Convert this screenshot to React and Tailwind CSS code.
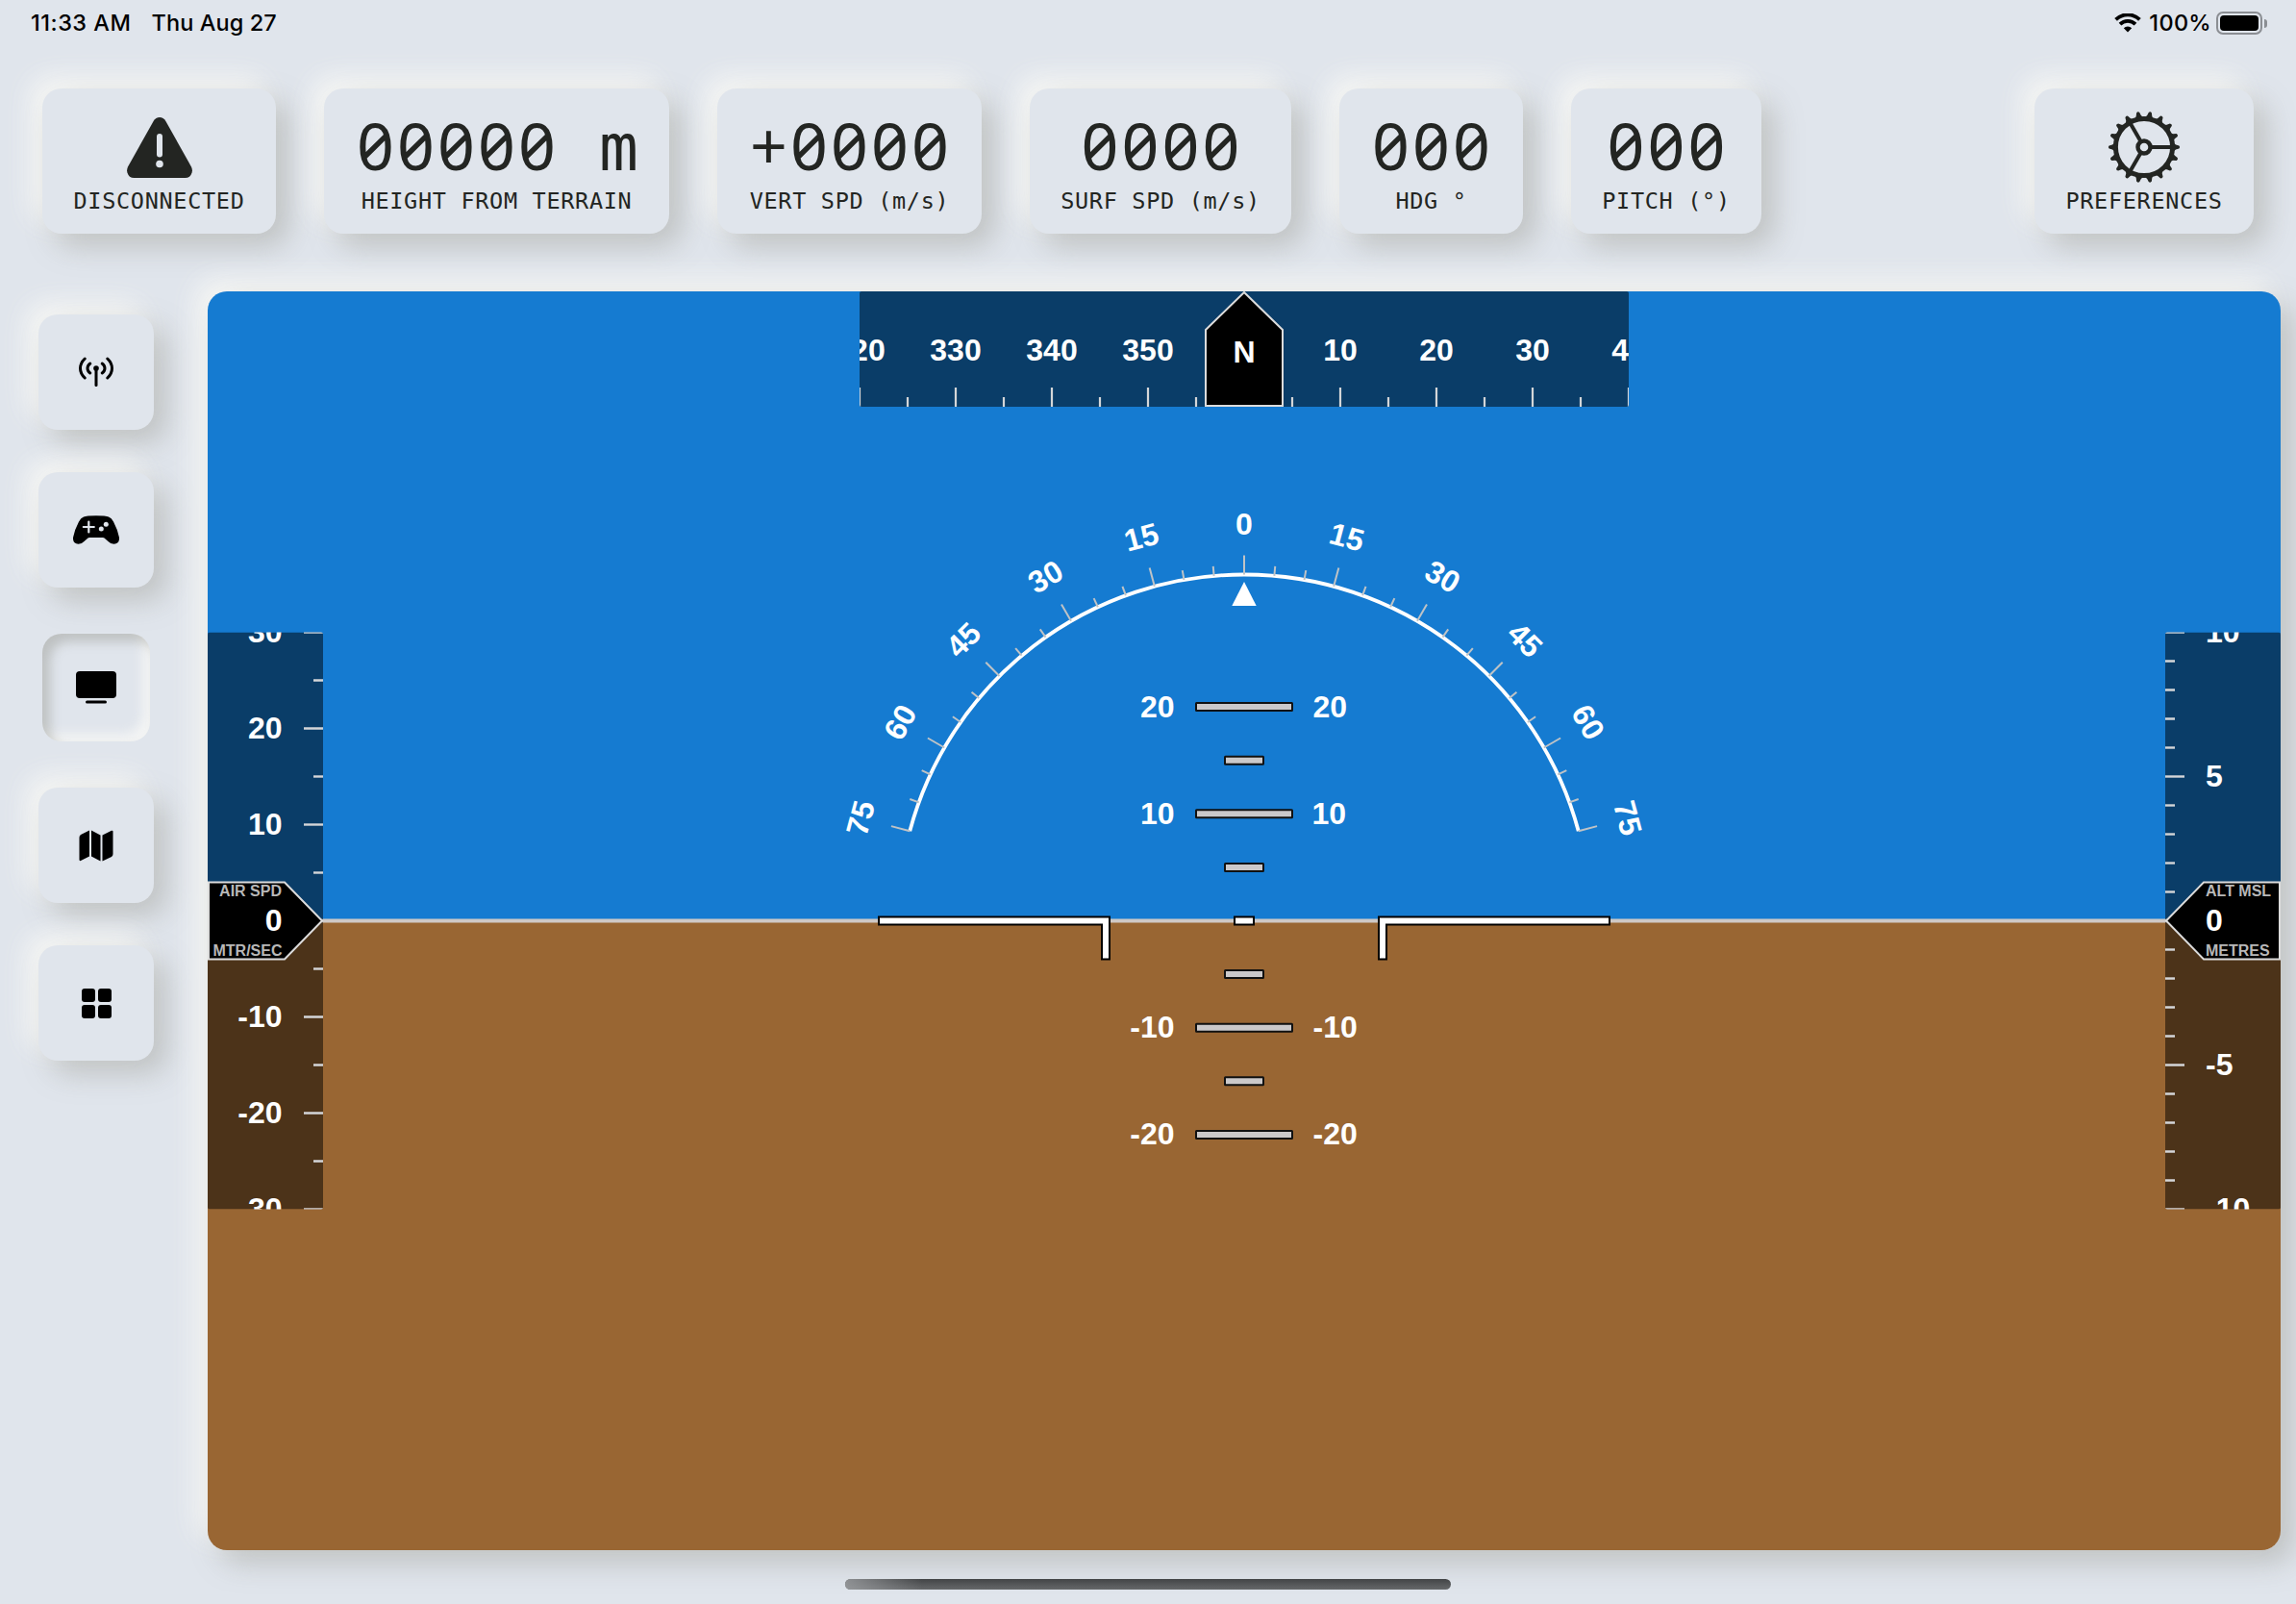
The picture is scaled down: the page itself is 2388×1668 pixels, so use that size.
const RAISED =
  "bg-[#e0e5ec] rounded-[20px] shadow-[13px_13px_30px_rgba(130,130,120,0.36),-11px_-11px_28px_rgba(250,250,247,0.95)]";

const TEXT = { fontFamily: '"Liberation Sans", Arial, sans-serif', fontWeight: 700 };

function Wifi() {
  return (
    <svg className="h-5 w-7" viewBox="0 0 28 20" fill="none" stroke="#000">
      <path d="M1.6 6.4 A17.6 17.6 0 0 1 26.4 6.4" strokeWidth="3.8" />
      <path d="M6 11.1 A11.4 11.4 0 0 1 22 11.1" strokeWidth="3.8" />
      <path d="M14 19.6 L9.8 15.3 A6 6 0 0 1 18.2 15.3 Z" fill="#000" stroke="none" />
    </svg>
  );
}

function StatusBar() {
  return (
    <header className="flex h-12 shrink-0 items-center justify-between pl-8 pr-[30px] font-['Inter',sans-serif] text-[23.5px] font-medium leading-none text-black">
      <div className="flex gap-[21px]">
        <span className="tracking-[0.5px]">11:33 AM</span>
        <span className="tracking-[0.1px]">Thu Aug 27</span>
      </div>
      <div className="flex items-center">
        <Wifi />
        <span className="ml-2 tracking-[0.3px]">100%</span>
        <div className="ml-[5px] flex h-6 w-12 items-center rounded-[7px] border-2 border-[#8b8e93] p-[2px]">
          <div className="h-full w-full rounded-[4px] bg-black" />
        </div>
        <div className="ml-[2px] h-[9px] w-[3px] rounded-r-full bg-[#8b8e93]" />
      </div>
    </header>
  );
}

function WarningIcon() {
  return (
    <svg className="h-[63px] w-[68px]" viewBox="0 0 68 63">
      <path
        d="M27.6 4 Q30 0 34 0 T40.4 4 L67 51.5 Q68.4 54.5 67.6 57.5 Q66 63 60.5 63 H7.5 Q2 63 .4 57.5 Q-.4 54.5 1 51.5 Z"
        fill="#232522"
      />
      <rect x="31" y="17" width="6" height="24.5" rx="3" fill="#e0e5ec" />
      <circle cx="34" cy="48.5" r="3.8" fill="#e0e5ec" />
    </svg>
  );
}

function GearIcon() {
  const teeth = Array.from({ length: 18 }, (_, i) => i * 20);
  return (
    <svg className="h-[76px] w-[76px]" viewBox="-38 -38 76 76">
      {teeth.map((a) => (
        <path
          key={a}
          d="M30 -5 L33 -2.6 L36.4 -1.6 Q38 0 36.4 1.6 L33 2.6 L30 5 Z"
          transform={`rotate(${a})`}
          fill="#232522"
        />
      ))}
      <circle r="29.6" fill="none" stroke="#232522" strokeWidth="5" />
      <circle r="6.5" fill="none" stroke="#232522" strokeWidth="4.4" />
      {[0, 120, 240].map((a) => (
        <path key={a} d="M7 0H29" transform={`rotate(${a})`} stroke="#232522" strokeWidth="4" />
      ))}
    </svg>
  );
}

function Card({ width, label, children }) {
  return (
    <div className={`${RAISED} ${width} flex h-[151px] shrink-0 flex-col items-center text-[#232522]`}>
      <div className="mt-[29px] flex h-16 items-center justify-center">{children}</div>
      <div className="mt-2 whitespace-pre font-['DejaVu_Sans_Mono',monospace] text-[23.5px] leading-8 tracking-[0.68px]">
        {label}
      </div>
    </div>
  );
}

function Value({ children, unit }) {
  return (
    <div className="-mt-[5px] h-16 whitespace-pre pl-[3px] font-['Noto_Sans',sans-serif] text-[68px] leading-[64px] tracking-[3.1px] [font-feature-settings:'zero','tnum']">
      {children}
      {unit && <span className="font-['DejaVu_Sans_Mono',monospace] text-[68px] leading-none tracking-[1px]">{` ${unit}`}</span>}
    </div>
  );
}

function TopCards() {
  return (
    <div className="mt-11 flex shrink-0 gap-[50px] pl-11 pr-11">
      <Card width="w-[243px]" label="DISCONNECTED">
        <WarningIcon />
      </Card>
      <Card width="w-[359px]" label="HEIGHT FROM TERRAIN">
        <Value unit="m">00000</Value>
      </Card>
      <Card width="w-[275px]" label="VERT SPD (m/s)">
        <Value>+0000</Value>
      </Card>
      <Card width="w-[272px]" label="SURF SPD (m/s)">
        <Value>0000</Value>
      </Card>
      <Card width="w-[191px]" label="HDG °">
        <Value>000</Value>
      </Card>
      <Card width="w-[198px]" label="PITCH (°)">
        <Value>000</Value>
      </Card>
      <div className="grow" />
      <Card width="w-[228px]" label="PREFERENCES">
        <GearIcon />
      </Card>
    </div>
  );
}

function AntennaIcon() {
  return (
    <svg className="h-[32px] w-[36px]" viewBox="0 0 36 32" fill="none" stroke="#000" strokeWidth="3" strokeLinecap="round">
      <path d="M6.2 2 Q1.5 6.5 1.5 12 T6.2 22" />
      <path d="M11.8 7 Q9 9 9 12 T11.8 17" />
      <path d="M24.2 7 Q27 9 27 12 T24.2 17" />
      <path d="M29.8 2 Q34.5 6.5 34.5 12 T29.8 22" />
      <path d="M18 12 V29.5" />
      <circle cx="18" cy="12" r="2.8" fill="#000" stroke="none" />
    </svg>
  );
}

function GamepadIcon() {
  return (
    <svg className="h-[30px] w-[48px]" viewBox="0 0 48 30">
      <path
        d="M11 1.6 Q14 .2 24 .2 T37 1.6 Q40 2.6 42 6.5 Q46.500 15 48 23 Q48.400 29.500 42.500 29.800 Q39 29.800 36.500 27 L32.500 23.500 Q32 23 31 23 H17 Q16 23 15.500 23.500 L11.500 27 Q9 29.800 5.500 29.800 Q-.4 29.500 0 23 Q1.500 15 6 6.500 Q8 2.600 11 1.600 Z"
        fill="#000"
      />
      <path d="M16.300 6.500 V17.500 M10.800 12 H21.800" stroke="#e0e5ec" strokeWidth="2.200" strokeLinecap="round" />
      <circle cx="29.300" cy="14" r="2.500" fill="#e0e5ec" />
      <circle cx="34.300" cy="9.300" r="2.500" fill="#e0e5ec" />
    </svg>
  );
}

function DisplayIcon() {
  return (
    <svg className="h-[34px] w-[42px]" viewBox="0 0 42 34">
      <rect width="42" height="28" rx="4" />
      <rect x="10" y="30.500" width="22" height="3" rx="1.500" />
    </svg>
  );
}

function MapIcon() {
  return (
    <svg className="h-[33px] w-[36px]" viewBox="0 0 36 33">
      <path d="M11 .5 V27.500 L2 32 Q.5 32.500 .5 31 V8 Q.5 6 2 5 Z" />
      <path d="M13 .5 L22.500 5.500 V32.500 L13 27.500 Z" />
      <path d="M24.500 5.500 L34 .8 Q35.500 .3 35.500 1.800 V25 Q35.500 27 34 28 L24.500 32.500 Z" />
    </svg>
  );
}

function GridIcon() {
  return (
    <div className="grid grid-cols-2 gap-[3px]">
      {[0, 1, 2, 3].map((i) => (
        <div key={i} className="h-[14px] w-[14px] rounded-[3px] bg-black" />
      ))}
    </div>
  );
}

function SideButton({ children }) {
  return <button className={`${RAISED} flex h-[120px] w-[120px] items-center justify-center`}>{children}</button>;
}

function Sidebar() {
  return (
    <nav className="flex w-[216px] shrink-0 flex-col gap-11 pl-10 pt-6">
      <SideButton>
        <AntennaIcon />
      </SideButton>
      <SideButton>
        <GamepadIcon />
      </SideButton>
      <div className="flex h-[120px] w-[120px] items-center justify-center">
        <button className="flex h-28 w-28 items-center justify-center rounded-[20px] bg-[#e0e5ec] shadow-[inset_8px_8px_12px_rgba(130,130,120,0.36),inset_-8px_-8px_12px_rgba(250,250,247,0.75)]">
          <DisplayIcon />
        </button>
      </div>
      <SideButton>
        <MapIcon />
      </SideButton>
      <SideButton>
        <GridIcon />
      </SideButton>
    </nav>
  );
}

function AirspeedTape() {
  const marks = Array.from({ length: 13 }, (_, i) => 30 - i * 5);
  return (
    <g>
      <g clipPath="url(#speedClip)">
        <rect x="-1078" y="-300" width="120" height="600" fill="#000" fillOpacity="0.5" />
        {marks.map((v) => (
          <g key={v}>
            <path d={`M${v % 10 === 0 ? -978 : -968} ${-v * 10}H-958`} stroke="#d4d6d8" strokeWidth="2.400" />
            {v % 10 === 0 && v !== 0 && (
              <text x="-1000.500" y={-v * 10 + 10.5} fontSize="32" textAnchor="end" fill="#fff" style={TEXT}>
                {v}
              </text>
            )}
          </g>
        ))}
      </g>
      <path d="M-1077 -40H-998L-959 0L-998 40H-1077Z" fill="#000" stroke="#dcdcdc" strokeWidth="2" />
      <text x="-1001" y="-26" fontSize="16" textAnchor="end" fill="#b8b8b8" style={TEXT}>AIR SPD</text>
      <text x="-1000.500" y="10.500" fontSize="32" textAnchor="end" fill="#fff" style={TEXT}>0</text>
      <text x="-1000.500" y="36" fontSize="16" textAnchor="end" fill="#b8b8b8" style={TEXT}>MTR/SEC</text>
    </g>
  );
}

function AltitudeTape() {
  const marks = Array.from({ length: 21 }, (_, i) => 10 - i);
  return (
    <g>
      <g clipPath="url(#altClip)">
        <rect x="958" y="-300" width="120" height="600" fill="#000" fillOpacity="0.5" />
        {marks.map((v) => (
          <g key={v}>
            <path d={`M958 ${-v * 30}H${v % 5 === 0 ? 978 : 968}`} stroke="#d4d6d8" strokeWidth="2.400" />
            {v % 5 === 0 && v !== 0 && (
              <text x="1000" y={-v * 30 + 10.5} fontSize="32" fill="#fff" style={TEXT}>
                {v}
              </text>
            )}
          </g>
        ))}
      </g>
      <path d="M1077 -40H998L959 0L998 40H1077Z" fill="#000" stroke="#dcdcdc" strokeWidth="2" />
      <text x="1000" y="-26" fontSize="16" fill="#b8b8b8" style={TEXT}>ALT MSL</text>
      <text x="1000" y="10.500" fontSize="32" fill="#fff" style={TEXT}>0</text>
      <text x="1000" y="36" fontSize="16" fill="#b8b8b8" style={TEXT}>METRES</text>
    </g>
  );
}

function HeadingTape() {
  const marks = Array.from({ length: 17 }, (_, i) => i * 5 - 40);
  return (
    <g transform="translate(0 -0.5)">
      <g clipPath="url(#headingClip)">
        <rect x="-400" y="-654" width="800" height="120" fill="#000" fillOpacity="0.5" />
        {marks.map((v) => (
          <g key={v}>
            <path d={`M${v * 10} ${v % 10 === 0 ? -554 : -544}V-534`} stroke="#d4d6d8" strokeWidth="2.200" />
            {v % 10 === 0 && v !== 0 && (
              <text x={v * 10} y="-582.500" fontSize="32" textAnchor="middle" fill="#fff" style={TEXT}>
                {(v + 360) % 360}
              </text>
            )}
          </g>
        ))}
      </g>
      <path d="M0 -653L40 -614V-535H-40V-614Z" fill="#000" stroke="#dcdcdc" strokeWidth="2" />
      <text x="0" y="-580" fontSize="32" textAnchor="middle" fill="#fff" style={TEXT}>N</text>
    </g>
  );
}

function BankScale() {
  const marks = Array.from({ length: 31 }, (_, i) => i * 5 - 75);
  const x = 360 * Math.sin((75 * Math.PI) / 180);
  const y = -360 * Math.cos((75 * Math.PI) / 180);
  return (
    <g>
      <path d={`M${-x} ${y}A360 360 0 0 1 ${x} ${y}`} fill="none" stroke="#fff" strokeWidth="3.800" />
      {marks.map((a) => (
        <g key={a} transform={`rotate(${a})`}>
          <path d={`M0 -360V${a % 15 === 0 ? -380 : -370}`} stroke="#bfc3c6" strokeWidth="2" />
          {a % 15 === 0 && (
            <text y="-402" fontSize="32" textAnchor="middle" fill="#fff" style={TEXT}>
              {Math.abs(a)}
            </text>
          )}
        </g>
      ))}
      <path d="M0 -352.500L12.700 -327.500H-12.700Z" fill="#fff" />
    </g>
  );
}

function PitchLadder() {
  return (
    <g>
      {[20, 15, 10, 5, -5, -10, -15, -20].map((p) => {
        const y = -p * 11.120;
        const half = p % 10 === 0 ? 50 : 20;
        return (
          <g key={p}>
            <rect x={-half} y={y - 4} width={half * 2} height="8" rx="0.500" fill="#cbc9ca" stroke="#111" strokeWidth="2" />
            {p % 10 === 0 && (
              <>
                <text x="-72.500" y={y + 10.5} fontSize="32" textAnchor="end" fill="#fff" style={TEXT}>{p}</text>
                <text x={p === 10 ? 70.500 : 71.500} y={y + 10.5} fontSize="32" fill="#fff" style={TEXT}>{p}</text>
              </>
            )}
          </g>
        );
      })}
    </g>
  );
}

function AttitudeIndicator() {
  return (
    <svg className="block h-full w-full" viewBox="-1078 -654.5 2156 1309">
      <defs>
        <clipPath id="speedClip"><rect x="-1078" y="-300" width="120" height="600" rx="2" /></clipPath>
        <clipPath id="altClip"><rect x="958" y="-300" width="120" height="600" rx="2" /></clipPath>
        <clipPath id="headingClip"><rect x="-400" y="-654" width="800" height="120" rx="2" /></clipPath>
      </defs>
      <rect x="-1078" y="-655" width="2156" height="655" fill="#157bd1" />
      <rect x="-1078" y="0" width="2156" height="655" fill="#996633" />
      <rect x="-1078" y="-2" width="2156" height="4" fill="#cfc9c6" />
      <BankScale />
      <PitchLadder />
      <g fill="#fff" stroke="#000" strokeWidth="2">
        <path d="M-380 -4H-140V40H-148V4H-380Z" />
        <path d="M380 -4H140V40H148V4H380Z" />
        <rect x="-10" y="-4" width="20" height="8" />
      </g>
      <AirspeedTape />
      <AltitudeTape />
      <HeadingTape />
    </svg>
  );
}

export default function App() {
  return (
    <div className="flex h-[1668px] w-[2388px] flex-col overflow-hidden bg-[#e0e5ec]">
      <StatusBar />
      <TopCards />
      <div className="mt-[60px] flex h-[1309px] shrink-0 pr-4">
        <Sidebar />
        <main className="h-full grow rounded-[20px] shadow-[13px_13px_30px_rgba(130,130,120,0.36),-11px_-11px_28px_rgba(250,250,247,0.95)]">
          <div className="h-full overflow-hidden rounded-[20px]">
            <AttitudeIndicator />
          </div>
        </main>
      </div>
      <div className="mt-[30px] flex justify-center">
        <div className="h-[11px] w-[630px] rounded-full bg-linear-to-b from-[#434547] to-[#66686a]">
          <div className="h-full w-20 rounded-l-full bg-linear-to-r from-[#a0a2a5]/80 to-transparent" />
        </div>
      </div>
    </div>
  );
}
